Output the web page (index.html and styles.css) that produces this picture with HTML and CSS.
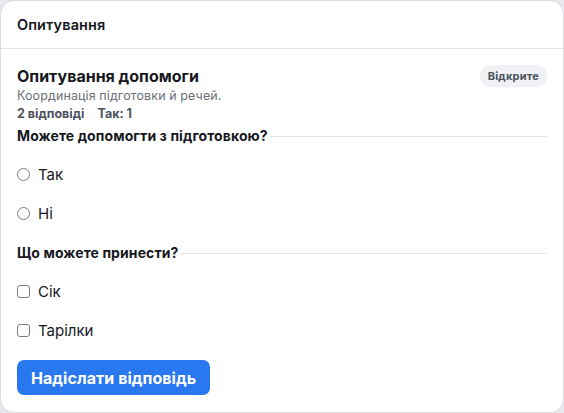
FILE: index.html
```html
<!DOCTYPE html>
<html lang="uk">
<head>
<meta charset="utf-8">
<title>Опитування</title>
<link rel="stylesheet" href="styles.css">
</head>
<body>
<section class="card">
  <header class="card-head">Опитування</header>
  <form class="poll">
    <div class="poll-top">
      <h2 class="poll-title">Опитування допомоги</h2>
      <span class="badge">Відкрите</span>
    </div>
    <p class="poll-desc">Координація підготовки й речей.</p>
    <p class="poll-stats"><span>2 відповіді</span><span>Так: 1</span></p>

    <fieldset class="question">
      <legend>Можете допомогти з підготовкою?</legend>
      <div class="options">
        <label class="option"><input type="radio" name="help" class="radio"><span>Так</span></label>
        <label class="option"><input type="radio" name="help" class="radio"><span>Ні</span></label>
      </div>
    </fieldset>

    <fieldset class="question">
      <legend>Що можете принести?</legend>
      <div class="options">
        <label class="option"><input type="checkbox" class="check"><span>Сік</span></label>
        <label class="option"><input type="checkbox" class="check"><span>Тарілки</span></label>
      </div>
    </fieldset>

    <button type="button" class="submit">Надіслати відповідь</button>
  </form>
</section>
</body>
</html>
```

FILE: styles.css
```css
* { box-sizing: border-box; }

html, body {
  margin: 0;
  height: 100%;
  background: #e8e9ec;
}

body {
  font-family: Inter, "Noto Sans", "Liberation Sans", sans-serif;
  color: #16181d;
}

.card {
  height: 413px;
  background: #fff;
  border: 1px solid #dadce0;
  border-radius: 14px;
  overflow: hidden;
}

.card-head {
  height: 48px;
  display: flex;
  align-items: center;
  padding: 0 16px;
  font-size: 14.5px;
  font-weight: 600;
  letter-spacing: 0.1px;
  border-bottom: 1px solid #e1e3e7;
}

.poll {
  padding: 16px 16px 17px 16px;
}

.poll-top {
  display: flex;
  align-items: center;
  justify-content: space-between;
  height: 22px;
}

.poll-title {
  margin: 0;
  font-size: 16px;
  font-weight: 700;
  line-height: 20px;
}

.badge {
  height: 22px;
  padding: 0 8px;
  display: inline-flex;
  align-items: center;
  border-radius: 11px;
  background: #eff1f4;
  color: #4b5260;
  font-size: 11px;
  font-weight: 700;
  letter-spacing: 0.2px;
}

.poll-desc {
  margin: 0;
  font-size: 12.5px;
  letter-spacing: 0.1px;
  line-height: 18px;
  color: #6b7079;
}

.poll-stats {
  margin: 0 0 3px;
  display: flex;
  gap: 13px;
  font-size: 12.5px;
  line-height: 18px;
  font-weight: 700;
  color: #4b5260;
}

.question {
  margin: 0 0 10px;
  padding: 0;
  border: 0;
  border-top: 1px solid #e1e3e7;
  min-width: 0;
}

.question legend {
  padding: 0 2px 0 0;
  font-size: 14px;
  font-weight: 700;
  line-height: 20px;
  letter-spacing: 0.1px;
}

.options {
  padding-top: 9px;
}

.option {
  display: flex;
  align-items: center;
  gap: 8px;
  height: 39px;
  font-size: 15px;
}

.radio, .check {
  appearance: none;
  margin: 0;
  width: 13px;
  height: 13px;
  border: 1px solid #7b7d82;
  background: #fff;
  flex: none;
}

.radio { border-radius: 50%; }
.check { border-radius: 3px; }

.submit {
  height: 35px;
  padding: 0 14px;
  border: 0;
  border-radius: 7px;
  background: #2a78f0;
  color: #fff;
  font-family: inherit;
  font-size: 16px;
  font-weight: 700;
  letter-spacing: 0.05px;
}
```
